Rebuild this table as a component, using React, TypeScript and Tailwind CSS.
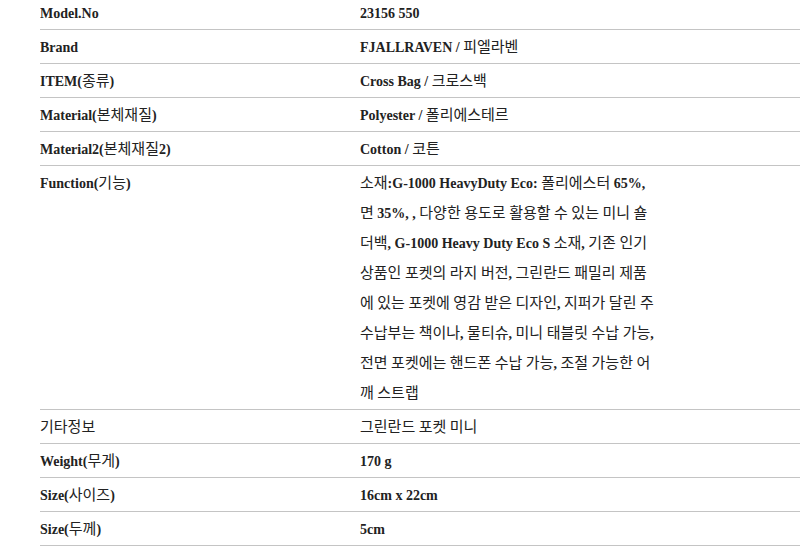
import React from 'react'

const rows: { label: string; value: string[] }[] = [
  { label: 'Model.No', value: ['23156 550'] },
  { label: 'Brand', value: ['FJALLRAVEN / 피엘라벤'] },
  { label: 'ITEM(종류)', value: ['Cross Bag / 크로스백'] },
  { label: 'Material(본체재질)', value: ['Polyester / 폴리에스테르'] },
  { label: 'Material2(본체재질2)', value: ['Cotton / 코튼'] },
  {
    label: 'Function(기능)',
    value: [
      '소재:G-1000 HeavyDuty Eco: 폴리에스터 65%,',
      '면 35%, , 다양한 용도로 활용할 수 있는 미니 숄',
      '더백, G-1000 Heavy Duty Eco S 소재, 기존 인기',
      '상품인 포켓의 라지 버전, 그린란드 패밀리 제품',
      '에 있는 포켓에 영감 받은 디자인, 지퍼가 달린 주',
      '수납부는 책이나, 물티슈, 미니 태블릿 수납 가능,',
      '전면 포켓에는 핸드폰 수납 가능, 조절 가능한 어',
      '깨 스트랩',
    ],
  },
  { label: '기타정보', value: ['그린란드 포켓 미니'] },
  { label: 'Weight(무게)', value: ['170 g'] },
  { label: 'Size(사이즈)', value: ['16cm x 22cm'] },
  { label: 'Size(두께)', value: ['5cm'] },
]

// latin parts bold serif, hangul parts plain gothic
const Mixed: React.FC<{ text: string }> = ({ text }) => {
  const parts = text.split(/([\uAC00-\uD7A3\u3131-\u318E]+)/)
  return (
    <>
      {parts.map((p, i) =>
        /[\uAC00-\uD7A3\u3131-\u318E]/.test(p) ? (
          <span
            key={i}
            className="font-normal text-[15px] leading-none font-['Noto_Sans_CJK_KR',sans-serif]"
          >
            {p}
          </span>
        ) : (
          <span key={i}>{p}</span>
        )
      )}
    </>
  )
}

const App: React.FC = () => {
  return (
    <div className="w-[800px] h-[547px] overflow-hidden bg-white">
      <div className="-mt-1 ml-10 font-['Liberation_Serif',serif] font-bold text-[14px] text-[#222]">
        {rows.map((r) => (
          <div key={r.label} className="flex border-b border-[#c4c4c4]">
            <div className="w-[320px] shrink-0 pt-[3px] h-[33px] leading-[30px] whitespace-nowrap overflow-hidden">
              <Mixed text={r.label} />
            </div>
            <div className="flex-1 pt-[3px] leading-[30px]">
              {r.value.map((line, i) => (
                <div key={i} className="h-[30px] whitespace-nowrap">
                  <Mixed text={line} />
                </div>
              ))}
            </div>
          </div>
        ))}
      </div>
    </div>
  )
}

export default App
